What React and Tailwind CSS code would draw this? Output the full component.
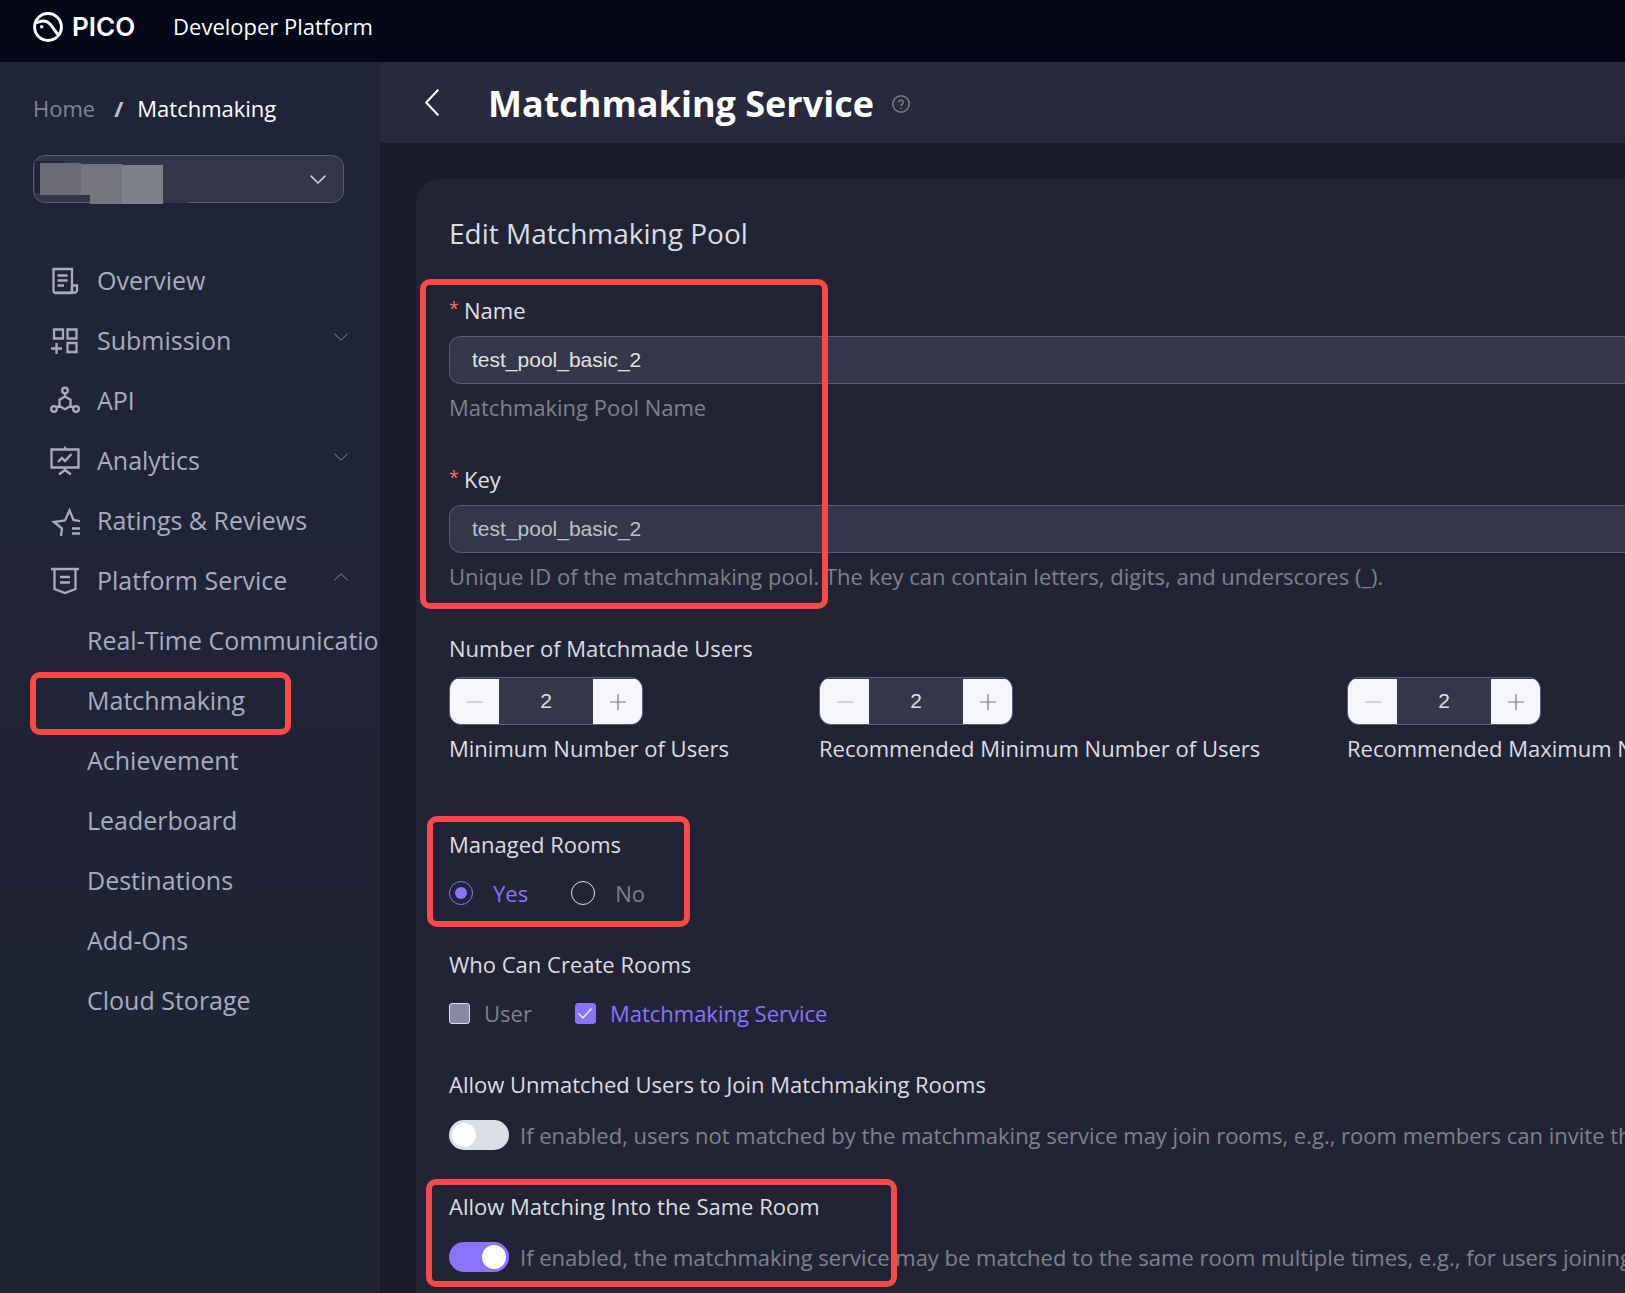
import React from "react";

const iconProps = {
  width: 30,
  height: 30,
  viewBox: "0 0 30 30",
  fill: "none",
  stroke: "currentColor",
  strokeWidth: 2.3,
  "aria-hidden": true,
};

function OverviewIcon() {
  return (
    <svg {...iconProps}>
      <path d="M3.500 3h18.500v24H6a2.500 2.500 0 0 1-2.500-2.500z" />
      <path d="M22 19.500h5V24a2.500 2.500 0 0 1-2.500 2.700H6.500M22 19.500V24a2 2 0 0 0 2.500 2.500" />
      <path d="M7.500 9.500h10M7.500 14.500h10M7.500 19.500h6.500" />
    </svg>
  );
}

function SubmissionIcon() {
  return (
    <svg {...iconProps}>
      <path d="M4 3.500h9v9H4zM17.500 3.500h9v9h-9zM17.500 17h9v9h-9zM6.500 17v11M1 22.500h11" />
    </svg>
  );
}

function ApiIcon() {
  return (
    <svg {...iconProps}>
      <circle cx="15" cy="4.500" r="2.800" />
      <circle cx="4" cy="23" r="2.800" />
      <circle cx="26" cy="23" r="2.800" />
      <path d="M15 7.500v3.500M6.500 21.500 9.500 19.800M23.500 21.500l-3-1.700M15 10.500l5.500 3.200v6.300L15 23.200 9.500 20v-6.300z" />
    </svg>
  );
}

function AnalyticsIcon() {
  return (
    <svg {...iconProps}>
      <path d="M1.500 3.500h27v18h-27zM15 .5v3M15 21.500v2M9 28.500l6-4.500 6 4.500M8 16l4-4 3 3 6.500-7" />
    </svg>
  );
}

function RatingsIcon() {
  return (
    <svg {...iconProps}>
      <path d="M11 30l1-7.500-8-6.500 11-1.500L19.500 4.500l4 9.500 6.500 1.200M22 22.500h8M22 27.500h8" />
    </svg>
  );
}

function PlatformIcon() {
  return (
    <svg {...iconProps}>
      <path d="M1 3h28M4.500 3v20L15 27l10.500-4V3M10 11h10M10 16.500h10" />
    </svg>
  );
}

function Chevron({ up }) {
  return (
    <svg width="14" height="8" viewBox="0 0 14 8" fill="none" stroke="#8d8fa0" strokeWidth="1" aria-hidden="true">
      {up ? <path d="M.5 7.200 7 .8l6.500 6.400" /> : <path d="M.5.8 7 7.200 13.500.8" />}
    </svg>
  );
}

function Highlight({ className }) {
  return (
    <span
      aria-hidden="true"
      className={`pointer-events-none absolute rounded-[10px] border-6 border-[#f94a47] ${className}`}
    />
  );
}

const menu = [
  { label: "Overview", icon: OverviewIcon },
  { label: "Submission", icon: SubmissionIcon, arrow: "down" },
  { label: "API", icon: ApiIcon },
  { label: "Analytics", icon: AnalyticsIcon, arrow: "down" },
  { label: "Ratings & Reviews", icon: RatingsIcon },
  { label: "Platform Service", icon: PlatformIcon, arrow: "up" },
];

const services = [
  "Real-Time Communication",
  "Matchmaking",
  "Achievement",
  "Leaderboard",
  "Destinations",
  "Add-Ons",
  "Cloud Storage",
];

function TopBar() {
  return (
    <header className="flex h-[62px] items-center bg-[#020617] pb-2 pl-[33px] text-white">
      <a href="#" className="flex items-center gap-[9px]" aria-label="PICO home">
        <svg width="30" height="30" viewBox="0 0 30 30" fill="none" stroke="white" strokeWidth="3" aria-hidden="true">
          <circle cx="15" cy="15" r="13.400" />
          <path d="M3 11C8 8.500 13 8 17 12c3 3.200 4 6 8 10.500" />
          <circle cx="8.700" cy="14.700" r="1.800" fill="white" stroke="none" />
        </svg>
        <span className="font-['Inter'] text-[26px] leading-[30px] font-semibold">PICO</span>
      </a>
      <span className="ml-[38px] pb-[3px] text-[22px] leading-[30px]">Developer Platform</span>
    </header>
  );
}

function AppPicker() {
  return (
    <div className="relative mt-8 mr-9 ml-[33px]">
      <select
        aria-label="Application"
        className="block h-12 w-full appearance-none rounded-xl border border-[#595b80] bg-[#333649]"
      >
        <option value=""></option>
      </select>
      <svg className="pointer-events-none absolute top-0 left-0" width="170" height="60" viewBox="0 0 170 60" aria-hidden="true">
        <path d="M2 6h30v2H7v30H2z" fill="#202438" />
        <path d="M57 46h100l-8 4-20 6-14 2H78l-21-4z" fill="#202438" />
        <path d="M129 10h33v34l-10 4h-23z" fill="#343649" />
        <path d="M7 8h41v32H7z" fill="#6b6c77" />
        <path d="M48 9h41v40H57V40h-9z" fill="#74757d" />
        <path d="M89 10h41v39H89z" fill="#7f8189" />
      </svg>
      <svg className="pointer-events-none absolute top-5 right-[18px]" width="16" height="9" viewBox="0 0 16 9" fill="none" stroke="#d0d1d8" strokeWidth="1.500" aria-hidden="true">
        <path d="M.6.6 8 8 15.400.6" />
      </svg>
    </div>
  );
}

function Sidebar() {
  return (
    <aside className="w-[380px] shrink-0 overflow-hidden bg-linear-to-b from-[#202438] to-[#1f2434]">
      <nav aria-label="Breadcrumb" className="mt-[31px] flex pl-[33px] text-[22px] leading-[30px]">
        <a href="#" className="text-[#82848f]">Home</a>
        <span className="ml-[19px] font-bold text-[#c3c4ca]">/</span>
        <span className="ml-[14px] text-white">Matchmaking</span>
      </nav>
      <AppPicker />
      <nav aria-label="Main" className="mt-12 text-[25px] leading-[58px] text-[#a9abc1]">
        <ul>
          {menu.map(({ label, icon: Icon, arrow }) => (
            <li key={label}>
              <a href="#" className="flex h-[60px] items-center pr-8 pl-[50px]">
                <Icon />
                <span className="ml-[17px] grow pb-0.5 whitespace-nowrap">{label}</span>
                {arrow && (
                  <span className="pb-2">
                    <Chevron up={arrow === "up"} />
                  </span>
                )}
              </a>
            </li>
          ))}
          {services.map((label) => (
            <li key={label} className="relative">
              <a href="#" className="block h-[60px] pl-[87px] whitespace-nowrap">{label}</a>
              {label === "Matchmaking" && <Highlight className="top-px -bottom-1 left-[30px] w-[261px]" />}
            </li>
          ))}
        </ul>
      </nav>
    </aside>
  );
}

function TextField({ id, label, value, hint, readOnly }) {
  return (
    <div>
      <label htmlFor={id} className="flex text-[#e0e1e4]">
        <span className="w-[15px] text-[18px] leading-[26px] text-[#f56c6c]">*</span>
        {label}
      </label>
      <input
        id={id}
        defaultValue={value}
        readOnly={readOnly}
        className={`mt-[11px] block h-12 w-full rounded-l-xl border border-r-0 border-[#595b80] bg-[#343649] pl-[22px] font-['Liberation_Sans'] text-[21px] outline-none ${readOnly ? "text-[#bfc1c8]" : "text-[#e0e1e4]"}`}
      />
      <p className="mt-2 whitespace-nowrap text-[#7f818a]">{hint}</p>
    </div>
  );
}

function Stepper({ id, label }) {
  return (
    <div>
      <div className="flex h-12 w-[194px] overflow-hidden rounded-xl border border-[#595b80] bg-[#343649] pt-px">
        <button type="button" aria-label={`Decrease ${label}`} className="grid w-[49px] shrink-0 place-items-center bg-[#f5f7fa]">
          <svg width="16" height="16" viewBox="0 0 16 16" stroke="#bfc2cc" strokeWidth="1.500" aria-hidden="true">
            <path d="M0 8h16" />
          </svg>
        </button>
        <input
          id={id}
          defaultValue="2"
          inputMode="numeric"
          className="w-0 grow bg-transparent pb-px text-center font-['Liberation_Sans'] text-[21px] text-[#e0e1e4] outline-none"
        />
        <button type="button" aria-label={`Increase ${label}`} className="grid w-[49px] shrink-0 place-items-center bg-[#f5f7fa]">
          <svg width="16" height="16" viewBox="0 0 16 16" stroke="#75777d" strokeWidth="1.200" aria-hidden="true">
            <path d="M0 8h16M8 0v16" />
          </svg>
        </button>
      </div>
      <label htmlFor={id} className="mt-2 block whitespace-nowrap">{label}</label>
    </div>
  );
}

function Radio({ label, checked }) {
  return (
    <label className="flex items-center gap-5 text-[#7f818a] has-checked:text-[#8b73ff]">
      <input
        type="radio"
        name="managed"
        defaultChecked={checked}
        className="grid size-6 appearance-none place-items-center rounded-full border border-[#e0e1e4] before:size-3 before:rounded-full checked:border-[#8b73ff] checked:before:bg-[#8b73ff]"
      />
      {label}
    </label>
  );
}

function Check({ label, checked }) {
  return (
    <label className="flex items-center gap-[14px] text-[#7f818a] has-checked:text-[#8b73ff]">
      <span className="relative">
        <input
          type="checkbox"
          defaultChecked={checked}
          className="peer block size-[21px] appearance-none rounded-[3px] border border-[#dcdfe6] bg-[#868aa6] checked:border-[#8b73ff] checked:bg-[#8b73ff]"
        />
        <svg
          className="pointer-events-none absolute inset-0 hidden peer-checked:block"
          width="21"
          height="21"
          viewBox="0 0 21 21"
          fill="none"
          stroke="white"
          strokeWidth="1.200"
          aria-hidden="true"
        >
          <path d="M3.500 10.500 8 15l8.500-9.500" />
        </svg>
      </span>
      {label}
    </label>
  );
}

function Toggle({ title, hint, checked }) {
  return (
    <label className="block">
      {title}
      <span className="mt-5 flex h-8 items-center gap-[11px] whitespace-nowrap text-[#7f818a]">
        <input
          type="checkbox"
          role="switch"
          defaultChecked={checked}
          className="flex h-[30px] w-[60px] shrink-0 appearance-none items-center rounded-full bg-[#dcdfe6] px-[3px] before:size-6 before:rounded-full before:bg-white checked:justify-end checked:bg-[#8b73ff]"
        />
        {hint}
      </span>
    </label>
  );
}

export default function App() {
  return (
    <div className="flex min-h-screen flex-col overflow-hidden bg-[#191b2b] font-['Open_Sans',sans-serif]">
      <TopBar />
      <div className="flex grow">
        <Sidebar />
        <main className="flex min-w-0 grow flex-col overflow-hidden">
          <div className="flex h-[81px] items-center bg-[#27293c] pl-[45px] text-white">
            <button type="button" aria-label="Back">
              <svg width="14" height="27" viewBox="0 0 14 27" fill="none" stroke="white" strokeWidth="2" aria-hidden="true">
                <path d="M13.300.8 1.200 13.500l12.100 12.700" />
              </svg>
            </button>
            <h1 className="ml-[49px] pt-0.5 text-[36px] leading-[50px] font-bold">Matchmaking Service</h1>
            <button type="button" aria-label="Help" className="ml-[18px] pt-[3px] text-[#7f818a]">
              <svg width="18" height="18" viewBox="0 0 18 18" fill="none" stroke="currentColor" strokeWidth="1.400" aria-hidden="true">
                <circle cx="9" cy="9" r="8.200" />
                <path d="M6.800 7.200a2.200 2.200 0 1 1 3.400 1.900c-.8.500-1.200.9-1.200 1.900M9 12.500v1.500" />
              </svg>
            </button>
          </div>
          <form className="mt-9 ml-9 grow rounded-tl-3xl bg-[#222435] pt-[34px] pb-5 pl-[33px] text-[22px] leading-[30px] text-[#dcdde1]">
            <h2 className="text-[28px] leading-10">Edit Matchmaking Pool</h2>
            <div className="relative mt-[42px] flex flex-col gap-[42px]">
              <TextField id="name" label="Name" value="test_pool_basic_2" hint="Matchmaking Pool Name" />
              <TextField
                id="key"
                label="Key"
                value="test_pool_basic_2"
                readOnly
                hint="Unique ID of the matchmaking pool. The key can contain letters, digits, and underscores (_)."
              />
              <Highlight className="-top-4 -bottom-[18px] -left-[29px] w-[408px]" />
            </div>
            <fieldset className="mt-[42px]">
              <legend className="mb-[14px]">Number of Matchmade Users</legend>
              <div className="grid grid-cols-[370px_528px_max-content]">
                <Stepper id="min" label="Minimum Number of Users" />
                <Stepper id="rec-min" label="Recommended Minimum Number of Users" />
                <Stepper id="rec-max" label="Recommended Maximum Number of Users" />
              </div>
            </fieldset>
            <div className="relative mt-[66px]">
              <fieldset>
                <legend className="mb-[19px]">Managed Rooms</legend>
                <div className="flex gap-[43px]">
                  <Radio label="Yes" checked />
                  <Radio label="No" />
                </div>
              </fieldset>
              <Highlight className="-top-[13px] -bottom-[19px] -left-[22px] w-[263px]" />
            </div>
            <fieldset className="mt-[41px]">
              <legend className="mb-[19px]">Who Can Create Rooms</legend>
              <div className="flex gap-[43px]">
                <Check label="User" />
                <Check label="Matchmaking Service" checked />
              </div>
            </fieldset>
            <div className="mt-[41px]">
              <Toggle
                title="Allow Unmatched Users to Join Matchmaking Rooms"
                hint="If enabled, users not matched by the matchmaking service may join rooms, e.g., room members can invite them"
              />
            </div>
            <div className="relative mt-10">
              <Toggle
                title="Allow Matching Into the Same Room"
                hint="If enabled, the matchmaking service may be matched to the same room multiple times, e.g., for users joining and"
                checked
              />
              <Highlight className="-top-3 -bottom-[14px] -left-[23px] w-[471px]" />
            </div>
          </form>
        </main>
      </div>
    </div>
  );
}
